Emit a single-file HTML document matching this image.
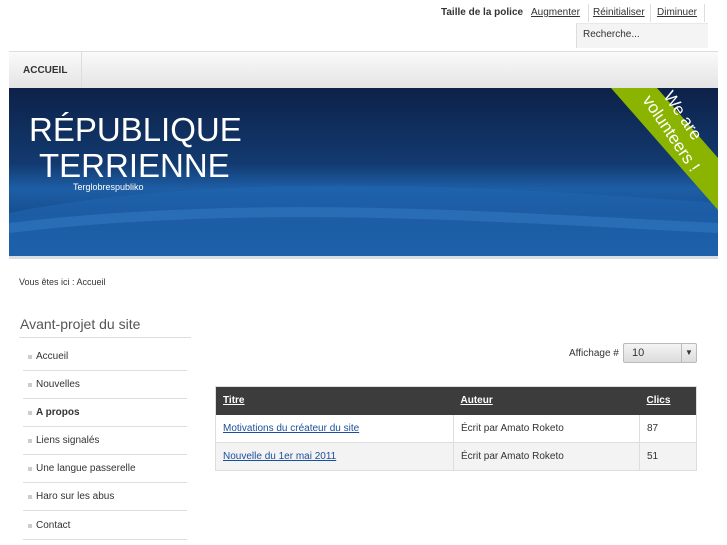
<!DOCTYPE html>
<html><head><meta charset="utf-8"><style>
*{margin:0;padding:0;box-sizing:border-box}
body{width:727px;height:545px;background:#fff;font-family:"Liberation Sans",sans-serif;font-size:10px;color:#333;position:relative;overflow:hidden}
.a{position:absolute}
a{color:#333}
.menu{left:9px;top:51px;width:709px;height:37px;background:linear-gradient(#fafafa,#e4e4e4);border-top:1px solid #ddd}
.banner{left:9px;top:88px;width:709px;height:171px;background:linear-gradient(180deg,#0d2148 0%,#123a70 45%,#1d5ea6 60%,#174f92 75%,#1a5aa0 100%);overflow:hidden;border-bottom:3px solid #d8dde4}
.side li{position:absolute;left:23px;width:164px;height:28px;border-bottom:1px solid #ddd;list-style:none;font-size:10px;line-height:28px;padding-left:13px}
.side li:before{content:"";position:absolute;left:5px;top:12px;width:4px;height:4px;background:#ccc}
td,th{font-size:10px;text-align:left;padding:0 7px}
</style></head><body>
<div class="a" style="left:441px;top:7px;font-size:10px"><b>Taille de la police</b></div>
<div class="a" style="left:531px;top:7px;font-size:10px"><a href="#">Augmenter</a></div>
<div class="a" style="left:588px;top:4px;height:18px;border-left:1px solid #ddd"></div>
<div class="a" style="left:593px;top:7px"><a href="#">Réinitialiser</a></div>
<div class="a" style="left:650px;top:4px;height:18px;border-left:1px solid #ddd"></div>
<div class="a" style="left:657px;top:7px"><a href="#">Diminuer</a></div>
<div class="a" style="left:704px;top:4px;height:18px;border-left:1px solid #ddd"></div>
<div class="a" style="left:576px;top:23px;width:132px;height:25px;background:#f4f4f4;border-left:1px solid #ddd;border-top:1px solid #e8e8e8;padding:5px 6px">Recherche...</div>
<div class="a menu"><div class="a" style="left:14px;top:13px;font-weight:bold">ACCUEIL</div><div class="a" style="left:72px;top:0;height:36px;border-left:1px solid #ddd"></div></div>
<div class="a banner">
<svg class="a" style="left:0;top:0" width="709" height="171"><path d="M0 125 C200 85 450 95 709 115 L709 171 L0 171Z" fill="#1f66b0" opacity=".6"/><path d="M0 140 C250 110 500 130 709 140" stroke="#3c86d0" stroke-width="10" fill="none" opacity=".4"/><polygon points="602,0 648,0 709,70 709,122" fill="#8ab400"/><text transform="translate(654,8) rotate(56)" fill="#fff" font-family="Liberation Sans" font-size="17">We are</text><text transform="translate(633,12) rotate(56)" fill="#fff" font-family="Liberation Sans" font-size="17">volunteers !</text></svg>
<div class="a" style="left:20px;top:23px;color:#fff;font-size:33px;line-height:37px">RÉPUBLIQUE</div>
<div class="a" style="left:30px;top:59px;color:#fff;font-size:33px;line-height:37px">TERRIENNE</div>
<div class="a" style="left:64px;top:94px;color:#fff;font-size:9px">Terglobrespubliko</div>
</div>
<div class="a" style="left:19px;top:277px;font-size:9px">Vous êtes ici : Accueil</div>
<div class="a" style="left:20px;top:316px;font-size:14px;color:#555">Avant-projet du site</div>
<div class="a" style="left:19px;top:337px;width:172px;border-top:1px solid #ddd"></div>
<ul class="side">
<li style="top:343px">Accueil</li><li style="top:371px">Nouvelles</li><li style="top:399px;font-weight:bold">A propos</li><li style="top:427px">Liens signalés</li><li style="top:455px">Une langue passerelle</li><li style="top:483px">Haro sur les abus</li><li style="top:512px">Contact</li></ul>
<div class="a" style="left:569px;top:348px">Affichage #</div>
<div class="a" style="left:623px;top:343px;width:74px;height:20px;border:1px solid #bbb;border-radius:2px;background:linear-gradient(#f4f4f4,#dcdcdc);padding:3px 8px;font-size:11px">10<div class="a" style="right:0;top:0;width:15px;height:18px;border-left:1px solid #bbb;font-size:8px;text-align:center;line-height:18px">▼</div></div>
<table class="a" style="left:215px;top:386px;width:482px;border-collapse:collapse;border:1px solid #ddd">
<tr style="background:#3c3c3c;height:28px"><th style="width:238px"><a href="#" style="color:#fff">Titre</a></th><th style="width:186px"><a href="#" style="color:#fff">Auteur</a></th><th><a href="#" style="color:#fff">Clics</a></th></tr>
<tr style="height:28px"><td style="border-right:1px solid #ddd"><a href="#" style="color:#1a4f9c">Motivations du créateur du site</a></td><td style="border-right:1px solid #ddd">Écrit par Amato Roketo</td><td>87</td></tr>
<tr style="height:28px;background:#f3f3f3;border-top:1px solid #ddd"><td style="border-right:1px solid #ddd"><a href="#" style="color:#1a4f9c">Nouvelle du 1er mai 2011</a></td><td style="border-right:1px solid #ddd">Écrit par Amato Roketo</td><td>51</td></tr>
</table>
</body></html>
